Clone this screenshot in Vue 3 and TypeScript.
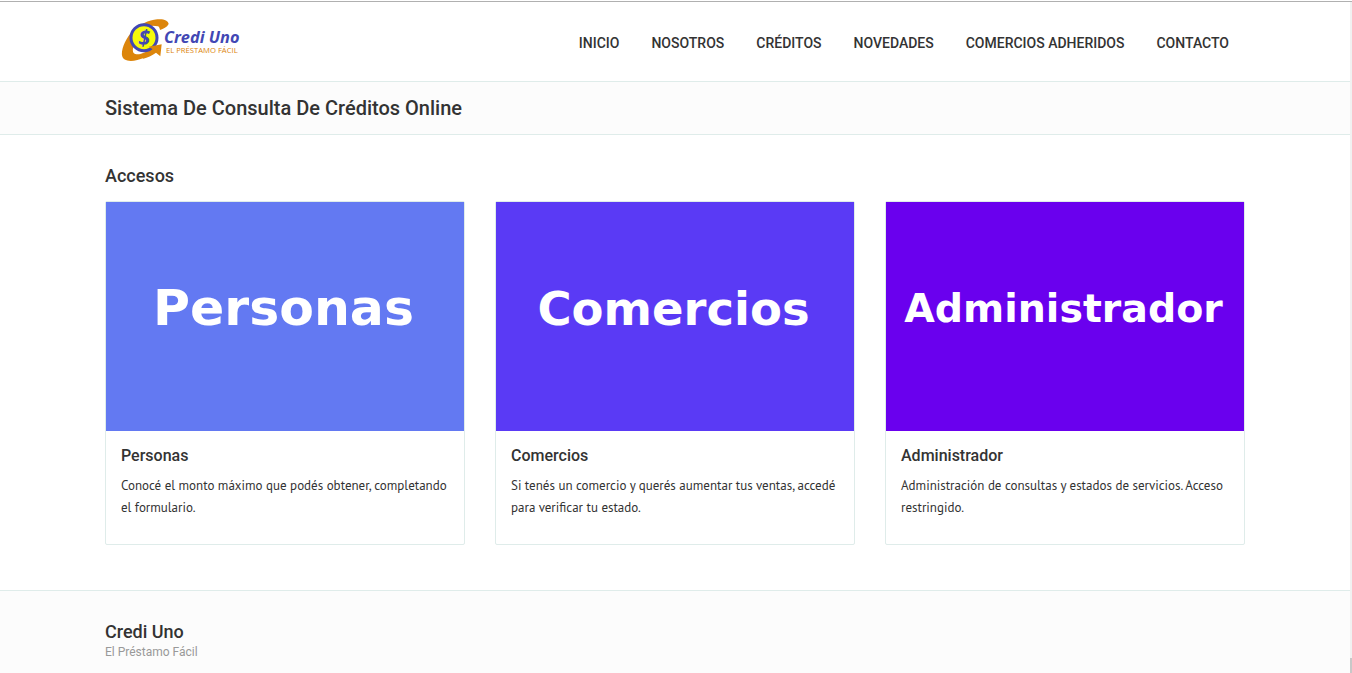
<script setup lang="ts">
interface Access {
  title: string
  text: string
  color: string
  size: number
  baseline: number
}

const links: string[] = ['Inicio', 'Nosotros', 'Créditos', 'Novedades', 'Comercios adheridos', 'Contacto']

const accesses: Access[] = [
  {
    title: 'Personas',
    text: 'Conocé el monto máximo que podés obtener, completando el formulario.',
    color: '#6379f2',
    size: 101,
    baseline: 245,
  },
  {
    title: 'Comercios',
    text: 'Si tenés un comercio y querés aumentar tus ventas, accedé para verificar tu estado.',
    color: '#5a3af5',
    size: 93,
    baseline: 246,
  },
  {
    title: 'Administrador',
    text: 'Administración de consultas y estados de servicios. Acceso restringido.',
    color: '#6a00ee',
    size: 79,
    baseline: 239,
  },
]
</script>

<template>
  <div class="window">
    <div class="page">
      <header class="header">
        <div class="container header-row">
          <a class="brand" href="#" aria-label="Credi Uno">
            <svg class="logo" viewBox="0 0 420 150" aria-hidden="true">
              <path
                fill="#dc850b"
                d="M176 39C175 28 160 23 142 25C116 28 88 40 68 60C48 80 33 115 36 133C38 149 58 153 82 147C102 142 122 132 136 122L128 108C112 122 90 133 76 129C66 126 66 112 76 96L128 44L144 46C148 48 149 52 150 57C160 53 171 49 176 39Z"
              />
              <circle cx="102" cy="80" r="39" fill="#f6fa0a" stroke="#4247b4" stroke-width="9" />
              <path fill="#dc850b" d="M116 107L155 100L151 136L138 125C126 134 112 140 100 143L92 133C108 130 120 123 128 115Z" />
              <text class="coin" x="102" y="103" text-anchor="middle">$</text>
              <text class="name" x="162" y="97">Credi Uno</text>
              <text class="slogan" x="168" y="127">EL PRÉSTAMO FÁCIL</text>
            </svg>
          </a>
          <nav class="nav" aria-label="Principal">
            <a v-for="link in links" :key="link" href="#">{{ link }}</a>
          </nav>
        </div>
      </header>

      <div class="title-bar">
        <div class="container">
          <h1>Sistema De Consulta De Créditos Online</h1>
        </div>
      </div>

      <main class="container main">
        <h2>Accesos</h2>
        <div class="cards">
          <a v-for="item in accesses" :key="item.title" class="card" href="#">
            <svg class="cover" viewBox="0 0 716 458" :style="{ background: item.color }" aria-hidden="true">
              <text x="355" :y="item.baseline" text-anchor="middle" :font-size="item.size">{{ item.title }}</text>
            </svg>
            <div class="card-body">
              <h3>{{ item.title }}</h3>
              <p>{{ item.text }}</p>
            </div>
          </a>
        </div>
      </main>

      <footer class="footer">
        <div class="container">
          <h4>Credi Uno</h4>
          <p>El Préstamo Fácil</p>
        </div>
      </footer>
    </div>
    <div class="rail" aria-hidden="true"><div class="thumb"></div></div>
  </div>
</template>

<style>
body {
  margin: 0;
  background: #fff;
}
</style>

<style scoped>
.window {
  display: flex;
  min-height: 100vh;
  box-sizing: border-box;
  padding-top: 1px;
  color: #333;
  font-family: Roboto, "Liberation Sans", sans-serif;
}
.page {
  flex: 1;
  min-width: 0;
  display: flex;
  flex-direction: column;
  border-top: 1px solid #b0b0b0;
}
.rail {
  width: 2px;
  display: flex;
  align-items: flex-end;
  border-top: 1px solid #b0b0b0;
  background: #f1f1f1;
}
.thumb {
  width: 2px;
  height: 15px;
  background: #c8c8c8;
}
.container {
  box-sizing: border-box;
  width: 100%;
  max-width: 1140px;
  margin: 0 auto;
}
a {
  color: inherit;
  text-decoration: none;
}
h1,
h2,
h3,
h4,
p {
  margin: 0;
}
h1,
h2,
h3,
h4 {
  font-weight: 500;
}
.header {
  border-bottom: 1px solid #dfecea;
}
.header-row {
  display: flex;
  align-items: center;
  justify-content: space-between;
  min-height: 79px;
}
.brand {
  display: block;
  margin-left: 5px;
  padding-bottom: 12px;
}
.logo {
  display: block;
  width: 140px;
  height: 50px;
}
.coin {
  font: italic 700 64px "Open Sans", sans-serif;
  fill: #4247b4;
}
.name {
  font: italic 700 49px "Open Sans", sans-serif;
  fill: #4247b4;
}
.slogan {
  font: 400 23px "Open Sans", sans-serif;
  fill: #dc850b;
}
.nav {
  display: flex;
  gap: 32px;
  padding: 2px 16px 0;
  font-size: 14px;
  font-weight: 500;
  line-height: 20px;
  text-transform: uppercase;
}
.title-bar {
  padding: 12px 0;
  background: #fcfcfc;
  border-bottom: 1px solid #dfecea;
}
h1 {
  font-size: 20px;
  line-height: 28px;
}
.main {
  padding: 28px 0 45px;
}
h2 {
  margin-bottom: 12px;
  font-size: 18px;
  line-height: 26px;
}
.cards {
  display: grid;
  grid-template-columns: repeat(3, 1fr);
  gap: 30px;
}
.card {
  border: 1px solid #dfecea;
  border-radius: 2px;
}
.cover {
  display: block;
  width: 100%;
}
.cover text {
  font-family: "DejaVu Sans", sans-serif;
  font-weight: 700;
  fill: #fff;
}
.card-body {
  padding: 12px 15px 25px;
}
h3 {
  margin-bottom: 6px;
  font-size: 16px;
  line-height: 26px;
}
.card-body p {
  font-family: "PT Sans", "Noto Sans", sans-serif;
  font-size: 13px;
  line-height: 22px;
}
.footer {
  flex: 1;
  padding: 28px 0 12px;
  background: #fcfcfc;
  border-top: 1px solid #dfecea;
}
h4 {
  font-size: 18px;
  line-height: 26px;
}
.footer p {
  color: #999;
  font-size: 12px;
  line-height: 14px;
}
</style>
